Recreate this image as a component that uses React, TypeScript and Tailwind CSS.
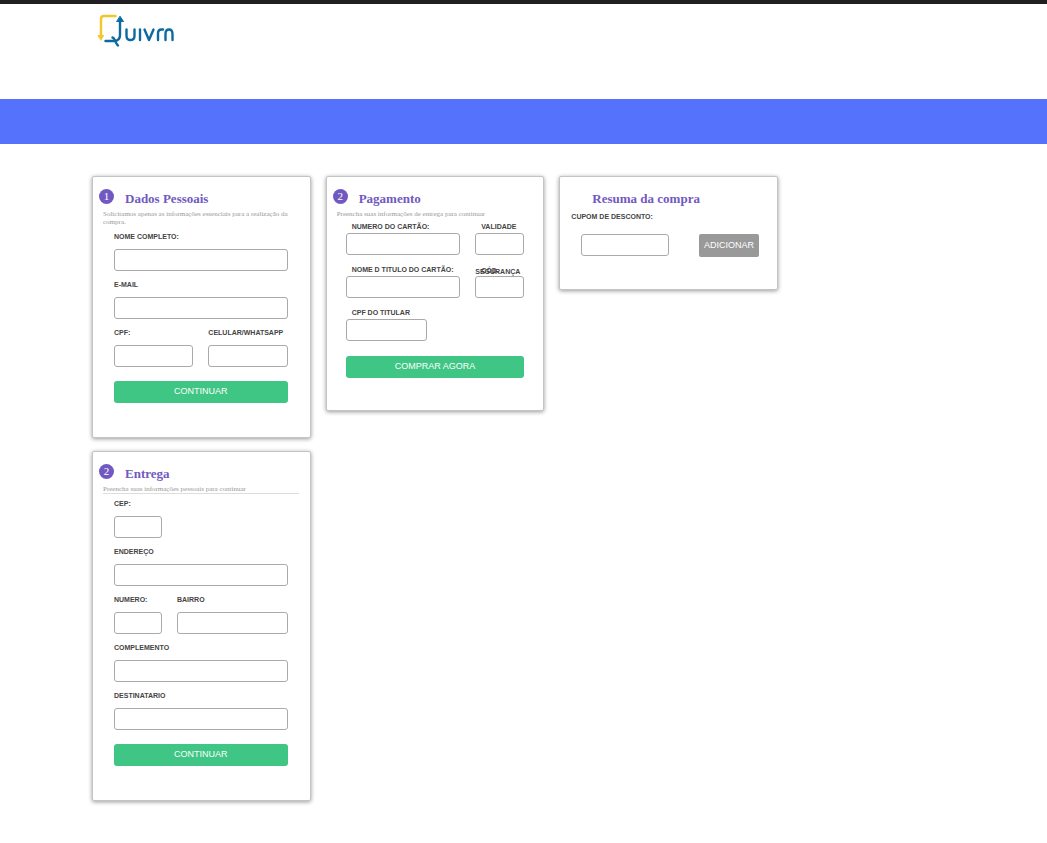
import type { ReactNode } from "react";

function Logo() {
  return (
    <svg
      role="img"
      aria-label="Quivrn"
      viewBox="0 0 84 40"
      className="h-10 w-21"
      fill="none"
      strokeLinecap="round"
      strokeLinejoin="round"
    >
      <g stroke="#f3c62b" strokeWidth="2.400">
        <path d="M21.500 6H10Q7 6 7 9V26" />
        <path d="M4.500 25.500H9.500L7 30Z" fill="#f3c62b" strokeWidth="1" />
      </g>
      <g stroke="#0d6a9f" strokeWidth="2.400">
        <path d="M11.500 31H20Q26 31 26 25V10" />
        <path d="M23 11.500H29.500L26.200 6.500Z" fill="#0d6a9f" strokeWidth="1" />
        <path d="M18.500 27.500C21 28 21.500 34 24 35.500" />
        <path d="M32.500 19.500V25.500Q32.500 30 36 30H37Q40.500 30 40.500 25.500V19.500" />
        <path d="M46 19.500V30" />
        <path d="M50.500 19.500L55 30L59.500 19.500" />
        <path d="M64 30V23.500Q64 19.500 67.500 19.500H69" />
        <path d="M71.500 30V24Q71.500 19.500 75 19.500Q78.500 19.500 78.500 24V30" />
      </g>
    </svg>
  );
}

function Card({ children, className = "" }: { children: ReactNode; className?: string }) {
  return (
    <section
      className={`rounded-xs border border-[#c4c4c4] bg-white pt-3 shadow-[0_1px_4px_rgba(0,0,0,0.4)] ${className}`}
    >
      {children}
    </section>
  );
}

function CardHeader({ step, title, children }: { step: string; title: string; children: ReactNode }) {
  return (
    <header>
      <div className="flex items-start gap-[11px] pl-1.5">
        <span className="size-[15px] rounded-full bg-[#7159c1] text-center text-[11px] leading-[14px] text-white">
          {step}
        </span>
        <h2 className="pt-0.5 text-[13px] leading-4 font-bold text-[#7159c1]">{title}</h2>
      </div>
      <p className="mr-[11px] ml-2.5 pt-[3px] text-[7px] leading-2 text-[#999]">{children}</p>
    </header>
  );
}

const labelText = "block font-['Liberation_Sans',sans-serif] text-[7px] font-bold text-[#444]";
const inputBox = "block h-[22px] w-full min-w-0 rounded-[3px] border border-[#aaa] bg-white px-1 text-[10px]";
const greenButton =
  "block h-[22px] w-full rounded-[3px] bg-[#3fc584] font-['Liberation_Sans',sans-serif] text-[9px] text-white";

function Field({ id, label, className = "" }: { id: string; label: string; className?: string }) {
  return (
    <div className={className}>
      <label htmlFor={id} className={`${labelText} mb-1.5 leading-3 whitespace-nowrap`}>
        {label}
      </label>
      <input id={id} type="text" className={inputBox} />
    </div>
  );
}

function CardField({ id, label }: { id: string; label: string }) {
  return (
    <div>
      <label htmlFor={id} className={`${labelText} pl-1.5 leading-3 whitespace-nowrap`}>
        {label}
      </label>
      <input id={id} type="text" className={inputBox} />
    </div>
  );
}

export default function App() {
  return (
    <div className="min-h-screen bg-white font-['Liberation_Serif',serif]">
      <header className="border-t-4 border-[#211f22]">
        <div className="h-[95px] pt-1.5 pl-[94px]">
          <Logo />
        </div>
        <div className="h-[45px] bg-[#5472fc]" />
      </header>

      <main className="mt-8 mr-4 ml-[92px] grid max-w-[686px] grid-cols-3 items-start gap-x-[15px] pb-10">
        <div className="flex flex-col gap-[13px]">
          <Card className="pb-[34px]">
            <CardHeader step="1" title="Dados Pessoais">
              Solicitamos apenas as informações essenciais para a realização da compra.
            </CardHeader>
            <form className="mt-[5px] mr-[22px] ml-[21px] flex flex-col gap-2">
              <Field id="nome" label="NOME COMPLETO:" />
              <Field id="email" label="E-MAIL" />
              <div className="grid grid-cols-2 gap-[15px]">
                <Field id="cpf" label="CPF:" />
                <Field id="celular" label="CELULAR/WHATSAPP" />
              </div>
              <button type="button" className={`${greenButton} mt-1.5`}>
                CONTINUAR
              </button>
            </form>
          </Card>

          <Card className="pb-[34px]">
            <CardHeader step="2" title="Entrega">
              Preencha suas informações pessoais para continuar
            </CardHeader>
            <hr className="mr-[11px] ml-2.5 border-[#ddd]" />
            <form className="mt-1 mr-[22px] ml-[21px] flex flex-col gap-2">
              <Field id="cep" label="CEP:" className="w-12" />
              <Field id="endereco" label="ENDEREÇO" />
              <div className="flex gap-[15px]">
                <Field id="numero" label="NUMERO:" className="w-12" />
                <Field id="bairro" label="BAIRRO" className="flex-1" />
              </div>
              <Field id="complemento" label="COMPLEMENTO" />
              <Field id="destinatario" label="DESTINATARIO" />
              <button type="button" className={`${greenButton} mt-1.5`}>
                CONTINUAR
              </button>
            </form>
          </Card>
        </div>

        <Card className="pb-8">
          <CardHeader step="2" title="Pagamento">
            Preencha suas informações de entrega para continuar
          </CardHeader>
          <form className="mx-[19px] mt-[3px] flex flex-col gap-[9px]">
            <div className="grid grid-cols-[7fr_3fr] gap-[15px]">
              <CardField id="cartao" label="NUMERO DO CARTÃO:" />
              <CardField id="validade" label="VALIDADE" />
            </div>
            <div className="grid grid-cols-[7fr_3fr] gap-[15px]">
              <CardField id="titular" label="NOME D TITULO DO CARTÃO:" />
              <div>
                <label htmlFor="codigo" className={`${labelText} h-3 pt-1.5 indent-1.5 leading-px`}>
                  CÓD. SEGURANÇA
                </label>
                <input id="codigo" type="text" className={inputBox} />
              </div>
            </div>
            <div className="w-[81px]">
              <CardField id="cpf-titular" label="CPF DO TITULAR" />
            </div>
            <button type="button" className={`${greenButton} mt-1.5`}>
              COMPRAR AGORA
            </button>
          </form>
        </Card>

        <Card className="pb-8">
          <h2 className="pt-0.5 pl-8 text-[13px] leading-4 font-bold text-[#7159c1]">Resuma da compra</h2>
          <form className="mt-1 pr-[18px] pl-[11px]">
            <label htmlFor="cupom" className={`${labelText} leading-3`}>
              CUPOM DE DESCONTO:
            </label>
            <div className="mt-[11px] flex justify-between pl-2.5">
              <div className="w-[88px]">
                <input id="cupom" type="text" className={inputBox} />
              </div>
              <button
                type="button"
                className="h-[23px] rounded-xs bg-[#999] px-[5px] font-['Liberation_Sans',sans-serif] text-[9px] text-white"
              >
                ADICIONAR
              </button>
            </div>
          </form>
        </Card>
      </main>
    </div>
  );
}
